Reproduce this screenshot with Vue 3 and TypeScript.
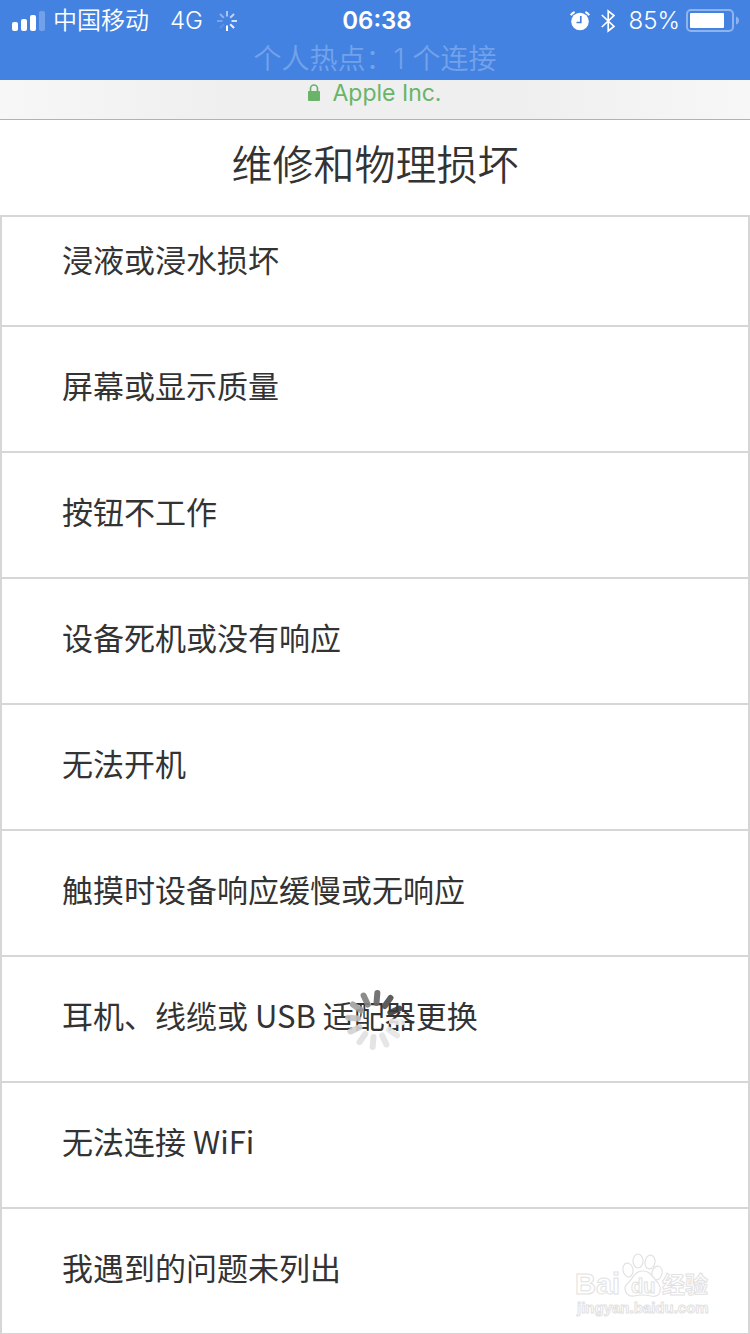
<script setup lang="ts">
interface Spoke {
  angle: number
  tone: string
}

const issues: string[] = [
  '浸液或浸水损坏',
  '屏幕或显示质量',
  '按钮不工作',
  '设备死机或没有响应',
  '无法开机',
  '触摸时设备响应缓慢或无响应',
  '耳机、线缆或 USB 适配器更换',
  '无法连接 WiFi',
  '我遇到的问题未列出',
]

const networkSpokes: number[] = [0.55, 0.65, 0.75, 0.88, 1, 0.12, 0.28, 0.4]

const loadingSpokes: Spoke[] = [
  '#666666', '#4c4c4c', '#3a3a3a', '#ececec', '#e6e6e6', '#e4e4e4',
  '#e2e2e2', '#e0e0e0', '#d2d2d2', '#c2c2c2', '#a0a0a0', '#808080',
].map((tone, i) => ({ angle: i * 30 + 5, tone }))
</script>

<template>
  <div class="screen">
    <header class="status">
      <div class="status-row">
        <div class="group">
          <svg class="signal" width="33" height="20" viewBox="0 0 33 20" fill="#fff" aria-hidden="true">
            <rect x="0" y="11" width="6" height="9" rx="2" />
            <rect x="9" y="8" width="6" height="12" rx="2" />
            <rect x="18" y="4" width="6" height="16" rx="2" />
            <rect x="27" y="0" width="6" height="20" rx="2" opacity="0.25" />
          </svg>
          <span class="carrier">中国移动</span>
          <span class="network">4G</span>
          <svg width="20" height="20" viewBox="-10 -10 20 20" stroke="#fff" stroke-width="2" aria-hidden="true">
            <path
              v-for="(opacity, i) in networkSpokes"
              :key="i"
              d="M0-4.5V-10"
              :transform="`rotate(${i * 45})`"
              :opacity="opacity"
            />
          </svg>
        </div>
        <time class="clock">06:38</time>
        <div class="group right">
          <svg class="alarm" width="20" height="20" viewBox="0 0 20 20" aria-hidden="true">
            <circle cx="10" cy="10.500" r="8.800" fill="#fff" />
            <path d="M.8 4.200A9 9 0 0 1 4.600 1M19.200 4.200A9 9 0 0 0 15.400 1" fill="none" stroke="#fff" stroke-width="2" />
            <path d="M10.800 5V11.500H6.500" fill="none" stroke="#4482e2" stroke-width="1.700" />
          </svg>
          <svg class="bluetooth" width="14" height="24" viewBox="0 0 14 24" fill="none" stroke="#fff" stroke-width="1.700" aria-hidden="true">
            <path d="M.8 6 13 17.500 7.200 22V2L13 6.500 .8 18" />
          </svg>
          <span class="percent">85%</span>
          <svg width="53" height="23" viewBox="0 0 53 23" aria-hidden="true">
            <rect x="1" y="1" width="46" height="21" rx="4" fill="none" stroke="#8fb4ed" stroke-width="2" />
            <rect x="4" y="4" width="34" height="15" rx="1" fill="#fff" />
            <path d="M50 7.500Q53 8.500 53 11.500T50 15.500Z" fill="#8fb4ed" />
          </svg>
        </div>
      </div>
      <p class="hotspot">个人热点：1 个连接</p>
    </header>

    <div class="address">
      <svg width="12" height="17" viewBox="0 0 12 17" aria-hidden="true">
        <path d="M2.500 8V4.500a3.500 3.500 0 0 1 7 0V8" fill="none" stroke="#69b469" stroke-width="1.700" />
        <rect y="7" width="12" height="10" rx="1" fill="#69b469" />
      </svg>
      <span>Apple Inc.</span>
    </div>

    <main>
      <h1>维修和物理损坏</h1>
      <ul class="issues">
        <li v-for="issue in issues" :key="issue">
          <button type="button">{{ issue }}</button>
        </li>
      </ul>
    </main>

    <svg class="loading" width="60" height="60" viewBox="-30 -30 60 60" role="img" aria-label="加载中">
      <path
        v-for="spoke in loadingSpokes"
        :key="spoke.angle"
        d="M0-17V-27"
        :stroke="spoke.tone"
        :transform="`rotate(${spoke.angle})`"
        stroke-width="6"
        stroke-linecap="round"
        opacity="0.9"
      />
    </svg>

    <svg class="watermark" width="140" height="68" viewBox="0 0 140 68" aria-hidden="true">
      <g fill="#fff" stroke="#e2e2e2" stroke-width="1.200">
        <ellipse cx="54" cy="18" rx="5" ry="7" transform="rotate(-12 54 18)" />
        <ellipse cx="64" cy="9" rx="5" ry="7" />
        <ellipse cx="76" cy="10" rx="5" ry="7" transform="rotate(8 76 10)" />
        <ellipse cx="83" cy="21" rx="5" ry="7" transform="rotate(15 83 21)" />
        <path d="M69 19C60 19 59 27 54 31C48 36 52 45 60 44Q69 42 77 44C87 46 88 36 84 31C79 26 77 19 69 19Z" />
      </g>
      <g class="marks">
        <text x="1" y="42" class="brand">Bai</text>
        <text x="57" y="41" class="du">du</text>
        <text x="88" y="41" class="cjk">经验</text>
        <text x="3" y="61" class="site">jingyan.baidu.com</text>
      </g>
    </svg>
  </div>
</template>

<style>
body {
  margin: 0;
  background: #fff;
}
</style>

<style scoped>
.screen {
  position: relative;
  height: 100vh;
  overflow: hidden;
  background: #fff;
  color: #333;
  font-family: "Noto Sans CJK SC", sans-serif;
}

.status {
  height: 80px;
  background: #4482e2;
  color: #fff;
  font-family: Inter, "Noto Sans CJK SC", sans-serif;
}

.status-row {
  display: grid;
  grid-template-columns: 1fr auto 1fr;
  align-items: center;
  height: 41px;
  padding: 0 11px 0 12px;
  font-size: 24px;
  line-height: 41px;
}

.group {
  display: flex;
  align-items: center;
}

.right {
  justify-content: flex-end;
}

.carrier {
  margin-left: 8px;
  font-weight: 350;
}

.network {
  margin: 0 14px 0 21px;
  font-weight: 350;
}

.clock {
  padding-left: 3px;
  font-weight: 600;
}

.bluetooth {
  margin: 0 14px 0 11px;
}

.percent {
  margin-right: 6px;
  font-weight: 350;
}

.hotspot {
  margin: 0;
  font-size: 28px;
  font-weight: 350;
  line-height: 37px;
  text-align: center;
  color: #73a2ea;
}

.address {
  display: flex;
  justify-content: center;
  gap: 12px;
  box-sizing: border-box;
  height: 40px;
  padding-top: 4px;
  border-bottom: 1px solid #b2b2b2;
  background: linear-gradient(to right, #f7f7f7, #efefef 30%, #efefef 70%, #f7f7f7);
  color: #69b469;
  font-family: Inter, sans-serif;
  font-size: 23px;
  line-height: 18px;
}

h1 {
  margin: 0;
  padding: 12px 0 23px;
  font-size: 41px;
  font-weight: 350;
  line-height: 60px;
  text-align: center;
}

.issues {
  margin: 0;
  padding: 0;
  list-style: none;
  border: 2px solid #d6d6d6;
}

.issues li + li {
  border-top: 2px solid #d6d6d6;
}

.issues button {
  display: block;
  width: 100%;
  padding: 38px 60px 46px;
  border: 0;
  background: none;
  color: inherit;
  font-family: inherit;
  font-size: 31px;
  font-weight: 400;
  line-height: 40px;
  text-align: left;
}

.issues li:first-child button {
  padding-top: 22px;
}

.loading {
  position: absolute;
  top: 990px;
  left: calc(50% - 30px);
}

.watermark {
  position: absolute;
  right: 36px;
  bottom: 14px;
}

.marks {
  fill: #fff;
  stroke: #e2e2e2;
  stroke-width: 1px;
  font-family: "Liberation Sans", sans-serif;
  font-weight: 700;
}

.brand {
  font-size: 29px;
}

.du {
  font-size: 20px;
}

.cjk {
  font-family: "Noto Sans CJK SC", sans-serif;
  font-size: 23px;
}

.site {
  font-size: 15px;
}
</style>
